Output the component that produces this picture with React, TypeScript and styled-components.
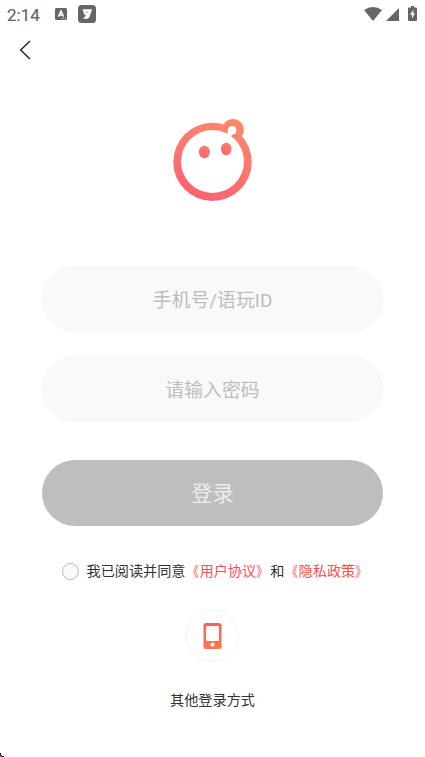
import React from "react";
import styled, { createGlobalStyle } from "styled-components";

const GlobalStyle = createGlobalStyle`
  *, *::before, *::after { box-sizing: border-box; }
  body {
    margin: 0;
    background: #fff;
    overflow: hidden;
    font-family: Roboto, "Noto Sans CJK SC", sans-serif;
  }
`;

const Screen = styled.main`
  position: relative;
  width: 425px;
  height: 757px;
  display: flex;
  flex-direction: column;
  align-items: center;
  background: #fff;
  overflow: hidden;
`;

const StatusBar = styled.header`
  width: 100%;
  height: 28px;
  padding: 0 8px 0 7px;
  display: flex;
  align-items: center;
  color: #666;
`;

const Clock = styled.span`
  width: 48px;
  font-size: 17px;
  font-weight: 400;
  -webkit-text-stroke: 0.2px #666;
  line-height: 28px;
  padding-top: 2px;
`;

const StatusIcon = styled.svg<{ $gap?: number }>`
  display: block;
  flex: none;
  margin-left: ${({ $gap = 0 }) => $gap}px;
`;

const SystemIcons = styled.div`
  display: flex;
  align-items: flex-end;
  margin-left: auto;
  padding-bottom: 1px;
`;

const NavBar = styled.nav`
  width: 100%;
  height: 44px;
  padding-left: 16px;
  display: flex;
  align-items: center;
`;

const BackButton = styled.button`
  padding: 0;
  border: 0;
  background: none;
  svg { display: block; }
`;

const Logo = styled.svg`
  display: block;
  margin-top: 44px;
`;

const Form = styled.form`
  width: 341px;
  margin-top: 62px;
  display: flex;
  flex-direction: column;
`;

const Field = styled.input`
  width: 100%;
  height: 66px;
  margin-bottom: 24px;
  padding: 2px 20px 0;
  border: 1px solid #f5f6f8;
  border-radius: 33px;
  outline: 0;
  background: #f7f9fb;
  font-family: inherit;
  font-size: 18.9px;
  text-align: center;
  &::placeholder { color: #bdbdbd; opacity: 1; }
`;

const SubmitButton = styled.button`
  height: 66px;
  margin-top: 14px;
  padding: 0 0 3px;
  border: 0;
  border-radius: 33px;
  background: #bebebe;
  color: #ececec;
  font-family: inherit;
  font-size: 21.25px;
`;

const Agreement = styled.label`
  height: 24px;
  margin: 33px 0 0 62px;
  display: flex;
  align-items: center;
  align-self: flex-start;
  color: #333;
  font-size: 14.15px;
  line-height: 24px;
  white-space: nowrap;
`;

const Check = styled.input`
  appearance: none;
  width: 17px;
  height: 17px;
  margin: 1px 7.5px 0 0;
  flex: none;
  border: 1px solid #b5b7b9;
  border-radius: 50%;
  background: #f7f9fb;
`;

const Policy = styled.span`
  color: #ff4d4f;
`;

const Bracket = styled.span<{ $side: "open" | "close" }>`
  display: inline-block;
  transform: scaleX(0.8);
  transform-origin: ${({ $side }) => ($side === "open" ? "88%" : "12%")} 50%;
`;

const PhoneLogin = styled.button`
  width: 53px;
  height: 53px;
  margin-top: 26px;
  padding: 0;
  display: grid;
  place-items: center;
  border: 1px solid #f3f3f3;
  border-radius: 50%;
  background: #fff;
`;

const OtherMethods = styled.p`
  margin: 26px 0 0;
  color: #333;
  font-size: 14.15px;
  line-height: 24px;
`;

const Corner = styled.svg`
  position: absolute;
  left: 0;
  bottom: 0;
`;

function PolicyLink({ title }: { title: string }) {
  return (
    <Policy>
      <Bracket $side="open">《</Bracket>
      {title}
      <Bracket $side="close">》</Bracket>
    </Policy>
  );
}

export default function App() {
  return (
    <>
      <GlobalStyle />
      <Screen lang="zh-CN">
        <StatusBar>
          <Clock>2:14</Clock>
          <StatusIcon width="12" height="12" viewBox="0 0 12 12">
            <rect width="12" height="12" rx="1.5" fill="#666" />
            <path d="M3.5 8.6 6 3l2.5 5.6M4.5 7h3" fill="none" stroke="#fff" strokeWidth="1.5" />
            <path d="M6.2 10.3h1M8 10.3h1M9.8 10.3h1" stroke="#ddd" strokeWidth="1" />
          </StatusIcon>
          <StatusIcon $gap={11} width="18" height="18" viewBox="0 0 18 18">
            <rect width="18" height="18" rx="3.5" fill="#666" />
            <path d="M4.5 4.3H14.2L11.3 12.3 9.6 13.8H5L8 10.6 6.2 9.3Z" fill="#fff" />
            <path d="m7.7 8 2-1.1" stroke="#777" strokeWidth="0.8" />
          </StatusIcon>
          <SystemIcons>
            <StatusIcon width="18" height="14" viewBox="0 0 18 14">
              <path d="M0 3Q9-3 18 3L9 14Z" fill="#666" />
            </StatusIcon>
            <StatusIcon $gap={4} width="13" height="13" viewBox="0 0 13 13">
              <path d="M13 0v13H0Z" fill="#666" />
            </StatusIcon>
            <StatusIcon $gap={9} width="9" height="15" viewBox="0 0 9 15">
              <path d="M3 0h3v1.5h2q1 0 1 1V14q0 1-1 1H1q-1 0-1-1V2.5q0-1 1-1h2Z" fill="#666" />
              <path d="M5.5 3.5 2 8.7h2v3.8l3-5.2H5.2Z" fill="#fff" />
            </StatusIcon>
          </SystemIcons>
        </StatusBar>
        <NavBar>
          <BackButton type="button" aria-label="返回">
            <svg width="18" height="22" viewBox="0 0 18 22">
              <path d="m14 2-9.3 9 9.3 9" fill="none" stroke="#282828" strokeWidth="1.5" />
            </svg>
          </BackButton>
        </NavBar>
        <Logo width="81" height="88" viewBox="172 116 81 88">
          <defs>
            <linearGradient id="coral" gradientUnits="userSpaceOnUse" x1="232" y1="119" x2="205" y2="201">
              <stop stopColor="#fb896d" />
              <stop offset="1" stopColor="#fd626f" />
            </linearGradient>
            <linearGradient id="eye" x1="0.7" y1="0" x2="0.3" y2="1">
              <stop stopColor="#fb806d" />
              <stop offset="1" stopColor="#fd626f" />
            </linearGradient>
          </defs>
          <circle cx="212.5" cy="161.9" r="39.2" fill="url(#coral)" />
          <circle cx="233" cy="129.7" r="10.8" fill="url(#coral)" />
          <circle cx="212.5" cy="161.5" r="31.5" fill="#fff" />
          <path d="M227 133.5Q228.2 132.5 227.8 130.3A4.3 4.3 0 1 1 232.7 134.6Q231 135 231.3 137.5Z" fill="#fff" />
          <ellipse cx="204.4" cy="152" rx="5.5" ry="6.2" fill="url(#eye)" />
          <ellipse cx="226.3" cy="149" rx="5.3" ry="6.2" fill="url(#eye)" />
        </Logo>
        <Form onSubmit={(event) => event.preventDefault()}>
          <Field type="text" placeholder="手机号/语玩ID" />
          <Field type="password" placeholder="请输入密码" />
          <SubmitButton type="submit">登录</SubmitButton>
        </Form>
        <Agreement>
          <Check type="checkbox" />
          我已阅读并同意
          <PolicyLink title="用户协议" />
          和
          <PolicyLink title="隐私政策" />
        </Agreement>
        <PhoneLogin type="button" aria-label="手机登录">
          <svg width="19" height="26" viewBox="0 0 19 26">
            <defs>
              <linearGradient id="phone" x1="0" y1="0" x2="0" y2="1">
                <stop stopColor="#ff5c60" />
                <stop offset="1" stopColor="#ff7650" />
              </linearGradient>
            </defs>
            <rect width="18" height="26" x="0.5" rx="2.5" fill="url(#phone)" />
            <rect x="3" y="3" width="13" height="15" rx="0.8" fill="#fff" />
            <circle cx="9.5" cy="21.5" r="2" fill="#fff" />
          </svg>
        </PhoneLogin>
        <OtherMethods>其他登录方式</OtherMethods>
        <Corner width="4" height="4" viewBox="0 0 4 4" aria-hidden="true">
          <path d="M0 0h1v2h1v1h2v1H0Z" fill="#211936" />
          <path d="M0 2h1v1h1v1H0Z" fill="#7557ad" />
        </Corner>
      </Screen>
    </>
  );
}
